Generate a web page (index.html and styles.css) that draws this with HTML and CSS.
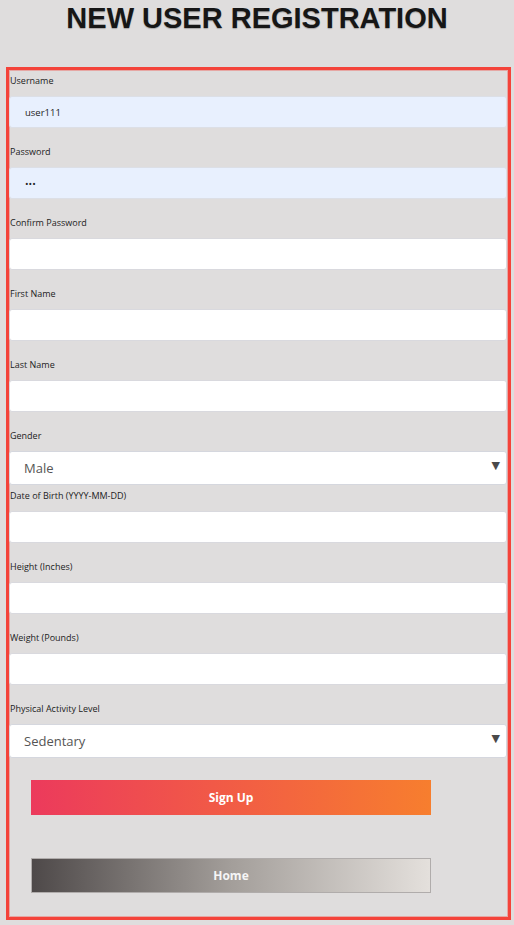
FILE: index.html
```html
<!DOCTYPE html>
<html lang="en">
<head>
<meta charset="utf-8">
<title>New User Registration</title>
<link rel="stylesheet" href="styles.css">
</head>
<body>
<h1 class="title">NEW USER REGISTRATION</h1>
<form class="reg-form">
  <label class="field-label">Username</label>
  <input class="field-input autofill" type="text" value="user111">

  <label class="field-label">Password</label>
  <input class="field-input autofill" type="password" value="abc">

  <label class="field-label">Confirm Password</label>
  <input class="field-input" type="password">

  <label class="field-label">First Name</label>
  <input class="field-input" type="text">

  <label class="field-label">Last Name</label>
  <input class="field-input" type="text">

  <label class="field-label">Gender</label>
  <div class="select-wrap">
    <div class="select-box">Male</div>
    <span class="select-arrow">▼</span>
  </div>

  <label class="field-label">Date of Birth (YYYY-MM-DD)</label>
  <input class="field-input" type="text">

  <label class="field-label">Height (Inches)</label>
  <input class="field-input" type="text">

  <label class="field-label">Weight (Pounds)</label>
  <input class="field-input" type="text">

  <label class="field-label">Physical Activity Level</label>
  <div class="select-wrap">
    <div class="select-box">Sedentary</div>
    <span class="select-arrow">▼</span>
  </div>

  <button type="button" class="btn btn-signup">Sign Up</button>
  <button type="button" class="btn btn-home">Home</button>
</form>
</body>
</html>
```
FILE: styles.css
```css
html, body {
  background: #dfdddd;
}
body {
  margin: 0;
  font-family: "Open Sans", "Liberation Sans", sans-serif;
}
.title {
  margin: 1px 0 32px;
  font-family: "Liberation Sans", Arial, sans-serif;
  font-size: 29px;
  line-height: 34px;
  font-weight: bold;
  text-align: center;
  color: #161616;
  text-shadow: 0 1px 1px rgba(0, 0, 0, 0.25);
}
.reg-form {
  display: flex;
  flex-direction: column;
  align-items: stretch;
  margin: 0 3px 0 6px;
  border: 3px solid #f4433a;
  box-shadow: inset 0 0 0 1px rgba(244, 67, 58, 0.35);
  padding: 0 0 24px;
}
.field-label {
  display: block;
  margin: 4px 0 8px 1px;
  font-size: 9px;
  line-height: 14px;
  color: #222;
}
.field-input {
  box-sizing: border-box;
  height: 32px;
  margin: 0 1px 13px 0;
  padding: 0 15px;
  border: 1px solid #d9d9de;
  border-radius: 3px;
  background: #fff;
  font-family: "Open Sans", sans-serif;
  font-size: 9.5px;
  color: #222;
  outline: none;
}
.field-input.autofill {
  background: #e8f0fe;
  border-color: #dcdfe6;
}
.select-wrap {
  position: relative;
  margin-right: 1px;
}
.select-box {
  box-sizing: border-box;
  height: 34px;
  padding: 0 14px;
  border: 1px solid #d5d7de;
  border-radius: 3px;
  background: #fff;
  font-size: 13px;
  line-height: 33px;
  color: #555;
}
.select-arrow {
  position: absolute;
  right: 7px;
  top: 8px;
  font-family: "DejaVu Sans", sans-serif;
  font-size: 11px;
  color: #4a4a4a;
}
.btn {
  align-self: flex-start;
  box-sizing: border-box;
  width: 400px;
  height: 35px;
  margin-left: 22px;
  border: none;
  font-family: "Open Sans", sans-serif;
  font-size: 12px;
  font-weight: bold;
  color: #fff;
  cursor: pointer;
}
.btn-signup {
  margin-top: 22px;
  background: linear-gradient(to right, #ec3a5c, #f77e2e);
}
.btn-home {
  margin-top: 43px;
  border: 1px solid #b0acab;
  background: linear-gradient(to right, #4e4949, #a39e9a 50%, #e4e0dc);
  color: #f6f6f6;
}
```
